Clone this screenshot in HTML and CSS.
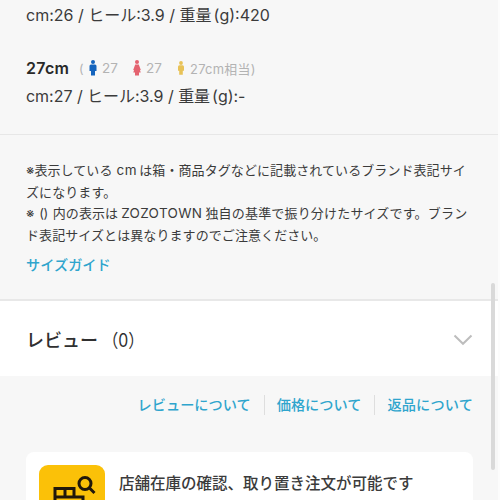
FILE: index.html
```html
<!DOCTYPE html>
<html lang="ja">
<head>
<meta charset="utf-8">
<title>サイズ詳細</title>
<link rel="stylesheet" href="styles.css">
</head>
<body>
<main class="page">
  <section class="sizes">
    <p class="spec spec-first">cm:26 / ヒール:3.9 / <span class="weight">重量</span>(g):420</p>
    <div class="size-head">
      <strong class="size-name">27cm</strong>
      <span class="paren">(</span>
      <svg class="person man" viewBox="0 0 8 16"><circle cx="4" cy="2" r="2"/><path d="M2 4.500h4Q7.500 4.500 7.500 6v5H6V15.500H2V11H.5V6Q.5 4.500 2 4.500z"/></svg>
      <span class="eq eq-man">27</span>
      <svg class="person woman" viewBox="0 0 8 16"><circle cx="4" cy="2" r="2"/><path d="M2.200 4.500h3.600L7.800 10H7l.7 2.500H6v3H2v-3H.3L1 10H.2z"/></svg>
      <span class="eq eq-woman">27</span>
      <svg class="person kid" viewBox="0 0 8 16"><circle cx="4" cy="3" r="1.900"/><path d="M2.400 5.200h3.200Q7 5.200 7 6.700v4H5.800v4H2.200v-4H1v-4Q1 5.200 2.400 5.200z"/></svg>
      <span class="eq eq-kid">27cm相当)</span>
    </div>
    <p class="spec spec-second">cm:27 / ヒール:3.9 / <span class="weight">重量</span>(g):-</p>
  </section>
  <section class="notes">
    <p class="note"><span class="line">※表示している<span class="latin">cm</span>は箱・商品タグなどに記載されているブランド表記サイ</span><span class="line">ズになります。</span><span class="line">※ <span class="tight">()</span> 内の表示は<span class="brand">ZOZOTOWN</span><span class="tail">独自の基準で振り分けたサイズです。ブラン</span></span><span class="line">ド表記サイズとは異なりますのでご注意ください。</span></p>
    <a class="link guide">サイズガイド</a>
  </section>
  <section class="review">
    <h2>レビュー<span class="count">（0）</span></h2>
    <svg class="chevron" viewBox="0 0 20 12"><path d="M1.500 1.500 10 9.800l8.500-8.300"/></svg>
  </section>
  <nav class="links">
    <a class="link">レビューについて</a>
    <a class="link">価格について</a>
    <a class="link">返品について</a>
  </nav>
  <section class="card">
    <svg class="store" viewBox="0 0 66 66"><rect width="66" height="66" rx="9" fill="#fbc108"/><g fill="none" stroke="#21180a" stroke-width="3"><circle cx="46" cy="18.500" r="6"/><path d="m50 22.500 5.500 5.500M36.500 23.500H16V38M16 32H44.500M26 23.500v8M35 23.500v8M44 30.500v8M18 38v14h26V38"/></g></svg>
    <h3>店舗在庫の確認、取り置き注文が可能です</h3>
  </section>
</main>
<div class="scroll"></div>
</body>
</html>
```
FILE: styles.css
```css
* { box-sizing: border-box; }
body {
  margin: 0;
  height: 500px;
  overflow: hidden;
  background: #fcfcfc;
  color: #3b3b3b;
  font-family: Inter, "Noto Sans CJK JP", sans-serif;
}
p, h2, h3 { margin: 0; }
.page { width: 498px; height: 500px; overflow: hidden; background: #f7f7f7; }
.sizes { height: 135px; padding: 2px 26px 0; border-bottom: 1px solid #e7e7e7; }
.spec { font-size: 16px; line-height: 26px; white-space: nowrap; }
.spec-first { margin-bottom: 26px; }
.spec-second { margin-top: 1px; letter-spacing: -.03px; }
.weight { margin-right: 2px; }
.size-head { display: flex; align-items: center; height: 28px; font-size: 12.500px; color: #b3b3b3; white-space: nowrap; }
.size-name { width: 53px; font-size: 16px; font-weight: 600; color: #292929; letter-spacing: .3px; }
.paren { width: 10px; }
.person { width: 8px; height: 16px; margin-right: 5px; }
.man { fill: #1464bd; }
.woman { fill: #e46370; }
.kid { fill: #e8c257; }
.eq-man, .eq-woman { width: 31px; font-size: 13.500px; }
.eq-kid { font-size: 12.900px; letter-spacing: .3px; }
.notes { height: 166px; padding: 25px 26px 0; border-bottom: 2px solid #e8e8e8; }
.line { display: block; height: 21.700px; font-size: 13px; line-height: 21.700px; letter-spacing: .08px; white-space: nowrap; }
.latin { margin: 0 2px 0 4px; letter-spacing: .6px; font-size: 13.500px; }
.brand { margin: 0 3px; font-size: 13.500px; letter-spacing: .35px; }
.tail { letter-spacing: .18px; }
.tight { margin: 0 1px; letter-spacing: -.3px; }
.link { color: #2fa5cd; font-size: 14.200px; font-weight: 500; white-space: nowrap; }
.guide { display: block; margin-top: 8px; line-height: 20px; }
.review { display: flex; align-items: center; justify-content: space-between; height: 75px; padding: 0 26px; background: #fff; }
h2 { font-size: 18px; font-weight: 500; color: #303030; }
.count { display: inline-block; margin-left: 1px; font-weight: 400; font-size: 18px; transform: scaleX(.88); transform-origin: 60% 50%; }
.chevron { width: 20px; height: 12px; margin: 2px -1px 0 0; fill: none; stroke: #bdbdbd; stroke-width: 2; }
.links { display: flex; justify-content: flex-end; height: 76px; padding: 19px 25px 0 0; }
.links .link { height: 20px; line-height: 20px; }
.links .link + .link { margin-left: 13px; padding-left: 12px; border-left: 1px solid #dedede; }
.links .link:last-child { letter-spacing: .15px; }
.card { display: flex; width: 447px; height: 90px; margin-left: 26px; padding: 13px; background: #fff; border-radius: 8px; }
.store { flex: none; width: 66px; height: 66px; margin-right: 14px; }
h3 { margin-top: 7px; font-size: 15.500px; line-height: 24px; font-weight: 500; white-space: nowrap; }
.scroll { position: absolute; left: 491px; top: 283px; width: 4px; height: 187px; border-radius: 2px; background: #d9d9d9; }
```
